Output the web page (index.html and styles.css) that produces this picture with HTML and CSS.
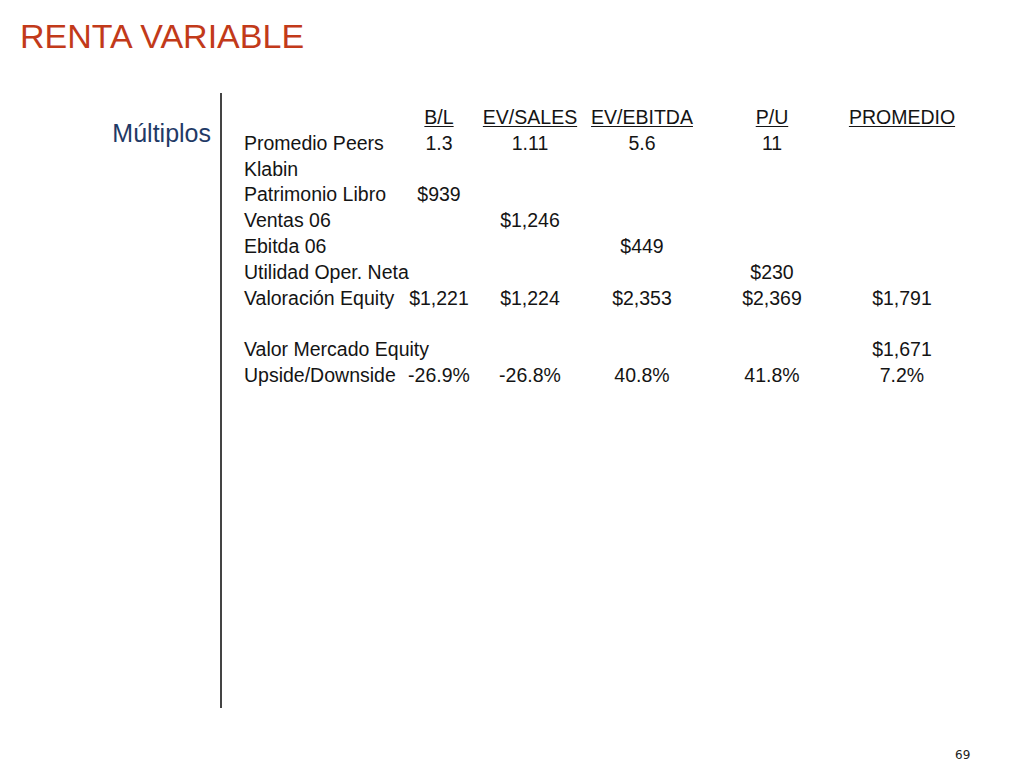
FILE: index.html
```html
<!DOCTYPE html>
<html lang="es">
<head>
<meta charset="utf-8">
<title>Renta Variable</title>
<link rel="stylesheet" href="styles.css">
</head>
<body>
<div class="slide">
  <h1 class="title">RENTA VARIABLE</h1>
  <div class="content">
    <div class="side">Múltiplos</div>
    <div class="divider"></div>
    <div class="table">
      <div class="row head">
        <span class="label"></span>
        <span class="cell"><u>B/L</u></span>
        <span class="cell"><u>EV/SALES</u></span>
        <span class="cell"><u>EV/EBITDA</u></span>
        <span class="cell"><u>P/U</u></span>
        <span class="cell"><u>PROMEDIO</u></span>
      </div>
      <div class="row">
        <span class="label">Promedio Peers</span>
        <span class="cell">1.3</span>
        <span class="cell">1.11</span>
        <span class="cell">5.6</span>
        <span class="cell">11</span>
        <span class="cell"></span>
      </div>
      <div class="row">
        <span class="label">Klabin</span>
        <span class="cell"></span><span class="cell"></span><span class="cell"></span><span class="cell"></span><span class="cell"></span>
      </div>
      <div class="row">
        <span class="label">Patrimonio Libro</span>
        <span class="cell">$939</span>
        <span class="cell"></span><span class="cell"></span><span class="cell"></span><span class="cell"></span>
      </div>
      <div class="row">
        <span class="label">Ventas 06</span>
        <span class="cell"></span>
        <span class="cell">$1,246</span>
        <span class="cell"></span><span class="cell"></span><span class="cell"></span>
      </div>
      <div class="row">
        <span class="label">Ebitda 06</span>
        <span class="cell"></span><span class="cell"></span>
        <span class="cell">$449</span>
        <span class="cell"></span><span class="cell"></span>
      </div>
      <div class="row">
        <span class="label">Utilidad Oper. Neta</span>
        <span class="cell"></span><span class="cell"></span><span class="cell"></span>
        <span class="cell">$230</span>
        <span class="cell"></span>
      </div>
      <div class="row">
        <span class="label">Valoración Equity</span>
        <span class="cell">$1,221</span>
        <span class="cell">$1,224</span>
        <span class="cell">$2,353</span>
        <span class="cell">$2,369</span>
        <span class="cell">$1,791</span>
      </div>
      <div class="row blank"></div>
      <div class="row">
        <span class="label">Valor Mercado Equity</span>
        <span class="cell"></span><span class="cell"></span><span class="cell"></span><span class="cell"></span>
        <span class="cell">$1,671</span>
      </div>
      <div class="row">
        <span class="label">Upside/Downside</span>
        <span class="cell">-26.9%</span>
        <span class="cell">-26.8%</span>
        <span class="cell">40.8%</span>
        <span class="cell">41.8%</span>
        <span class="cell">7.2%</span>
      </div>
    </div>
  </div>
  <div class="page-num">69</div>
</div>
</body>
</html>
```

FILE: styles.css
```css
html, body {
  margin: 0;
  padding: 0;
  background: #ffffff;
}

.slide {
  width: 1024px;
  height: 768px;
  position: relative;
  font-family: "Liberation Sans", Arial, sans-serif;
  overflow: hidden;
}

.title {
  margin: 19px 0 0 20px;
  font-size: 34px;
  line-height: 34px;
  font-weight: normal;
  color: #c23a1a;
}

.content {
  display: flex;
  margin-top: 40px;
}

.side {
  width: 211px;
  text-align: right;
  padding-top: 25px;
  font-size: 25px;
  line-height: 30px;
  color: #1f3a66;
  box-sizing: border-box;
}

.divider {
  width: 2px;
  height: 615px;
  margin-left: 9px;
  background: #444444;
}

.table {
  margin-left: 22px;
  padding-top: 12px;
  font-size: 19.5px;
  line-height: 25.8px;
  color: #141414;
}

.row {
  display: grid;
  grid-template-columns: 160px 70px 112px 112px 148px 112px;
  height: 25.8px;
}

.label {
  white-space: nowrap;
  overflow: visible;
}

.cell {
  text-align: center;
  white-space: nowrap;
}

.cell u {
  text-decoration-thickness: 1px;
  text-underline-offset: 2px;
}

.page-num {
  position: absolute;
  left: 955px;
  top: 748px;
  font-family: "DejaVu Sans", sans-serif;
  font-size: 12px;
  color: #222222;
}
```
